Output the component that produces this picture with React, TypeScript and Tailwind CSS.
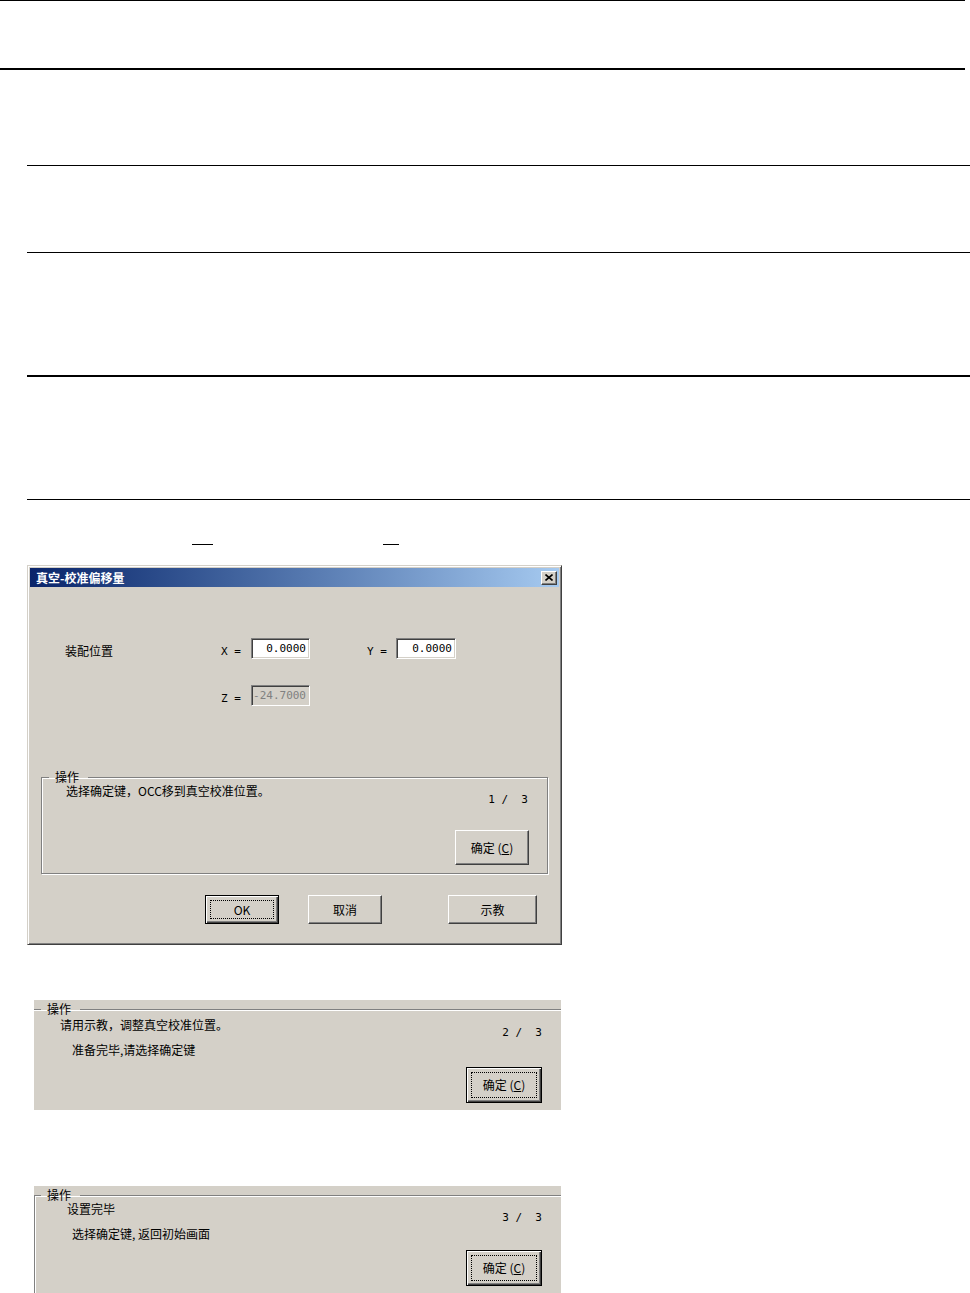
import React from "react";

// classic win32 bevels
const raised =
  "border border-t-white border-l-white border-r-[#404040] border-b-[#404040] shadow-[inset_-1px_-1px_0_#808080]";
const defaultBtn =
  "border border-black shadow-[inset_1px_1px_0_#fff,inset_-1px_-1px_0_#404040,inset_-2px_-2px_0_#808080]";
const sunken =
  "border border-t-[#808080] border-l-[#808080] border-r-white border-b-white shadow-[inset_1px_1px_0_#404040,inset_-1px_-1px_0_#d4d0c8]";
const etched = "border border-[#808080] shadow-[1px_1px_0_#fff,inset_1px_1px_0_#fff]";
const mono = "font-['DejaVu_Sans_Mono','Liberation_Mono',monospace] text-[11px] leading-[14px]";

function Btn({
  children,
  className,
  focused,
}: {
  children: React.ReactNode;
  className: string;
  focused?: boolean;
}) {
  return (
    <button
      type="button"
      className={`${focused ? defaultBtn : raised} ${className} flex shrink-0 bg-[#d4d0c8] p-[4px] text-black`}
    >
      <span
        className={`flex flex-1 items-center justify-center border ${
          focused ? "border-dotted border-black" : "border-transparent"
        }`}
      >
        {children}
      </span>
    </button>
  );
}

function Confirm({ className, focused }: { className: string; focused?: boolean }) {
  return (
    <Btn className={className} focused={focused}>
      确定 (<span className="underline">C</span>)
    </Btn>
  );
}

function Field({ value, disabled, w }: { value: string; disabled?: boolean; w: string }) {
  return (
    <div
      className={`${sunken} ${mono} ${w} h-[21px] flex items-center justify-end pr-[3px] ${
        disabled ? "bg-[#d4d0c8] text-[#808080]" : "bg-white text-black"
      }`}
    >
      {value}
    </div>
  );
}

function Step({ n, className }: { n: number; className: string }) {
  return <div className={`${mono} ${className} whitespace-pre`}>{`${n} /  3`}</div>;
}

export default function App() {
  return (
    <div className="w-[970px] min-h-[1293px] bg-white text-black text-[12px] leading-[14px] font-['Noto_Sans_CJK_SC','Liberation_Sans',sans-serif]">
      {/* document table rules */}
      <div className="w-[965px] h-[70px] border-t border-b-2 border-black" />
      <div className="ml-[27px]">
        <div className="h-[96px] border-b border-black" />
        <div className="h-[87px] border-b border-black" />
        <div className="h-[124px] border-b-2 border-black" />
        <div className="h-[123px] border-b border-black" />
      </div>
      <div className="flex pt-[44px]">
        <div className="ml-[192px] w-[21px] h-px bg-black" />
        <div className="ml-[170px] w-[16px] h-px bg-black" />
      </div>

      {/* dialog */}
      <div className="mt-[20px] ml-[27px] w-[535px] h-[380px] bg-[#d4d0c8] border border-t-[#d4d0c8] border-l-[#d4d0c8] border-r-[#404040] border-b-[#404040] shadow-[inset_1px_1px_0_#fff,inset_-1px_-1px_0_#808080] p-[2px] flex flex-col">
        <div className="h-[19px] flex items-center justify-between bg-linear-to-r from-[#0a246a] to-[#a6caf0] pl-[6px] pr-[2px]">
          <span className="text-white font-bold">真空-校准偏移量</span>
          <div className={`${raised} bg-[#d4d0c8] w-[16px] h-[14px] flex items-center justify-center`}>
            <svg width="8" height="7" viewBox="0 0 8 7">
              <path d="M0.5 0.5 L7.5 6.5 M7.5 0.5 L0.5 6.5" stroke="#000" strokeWidth="1.6" />
            </svg>
          </div>
        </div>

        <div className="mt-[51px] flex items-center h-[21px]">
          <span className="ml-[35px] w-[156px] pt-[5px]">装配位置</span>
          <span className={`${mono} w-[30px] pt-[6px]`}>X =</span>
          <Field value="0.0000" w="w-[59px]" />
          <span className={`${mono} ml-[57px] w-[29px] pt-[6px]`}>Y =</span>
          <Field value="0.0000" w="w-[60px]" />
        </div>
        <div className="mt-[26px] flex items-center h-[21px]">
          <span className={`${mono} ml-[191px] w-[30px] pt-[6px]`}>Z =</span>
          <Field value="-24.7000" w="w-[59px]" disabled />
        </div>

        <fieldset className={`${etched} mt-[64px] ml-[11px] w-[507px] pb-[8px]`}>
          <legend className="ml-[7px] pl-[6px] pr-[9px] leading-[14px]">操作</legend>
          <div className="flex">
            <div className="w-[413px] pl-[24px]">选择确定键，OCC移到真空校准位置。</div>
            <div className="w-[74px] flex flex-col items-end">
              <Step n={1} className="mt-[9px] mr-[1px]" />
              <Confirm className="mt-[23px] w-[74px] h-[35px]" />
            </div>
          </div>
        </fieldset>

        <div className="mt-[21px] flex">
          <Btn className="ml-[175px] w-[74px] h-[29px]" focused>
            OK
          </Btn>
          <Btn className="ml-[29px] w-[74px] h-[29px]">取消</Btn>
          <Btn className="ml-[66px] w-[89px] h-[29px]">示教</Btn>
        </div>
      </div>

      {/* step 2 */}
      <div className="mt-[55px] ml-[34px] w-[527px] h-[110px] bg-[#d4d0c8] overflow-hidden">
        <fieldset className={`${etched} mt-[2px] ml-[-6px] w-[560px] h-[140px]`}>
          <legend className="ml-[12px] pl-[6px] pr-[9px] leading-[14px]">操作</legend>
          <div className="flex">
            <div className="w-[437px] flex flex-col">
              <span className="ml-[31px] mt-[2px]">请用示教，调整真空校准位置。</span>
              <span className="ml-[43px] mt-[11px]">准备完毕,请选择确定键</span>
            </div>
            <div className="w-[76px] flex flex-col items-end">
              <Step n={2} className="mt-[10px]" />
              <Confirm className="mt-[27px] w-[76px] h-[36px]" focused />
            </div>
          </div>
        </fieldset>
      </div>

      {/* step 3 */}
      <div className="mt-[76px] ml-[34px] w-[527px] h-[107px] bg-[#d4d0c8] overflow-hidden">
        <fieldset className={`${etched} mt-[2px] w-[560px] h-[140px]`}>
          <legend className="ml-[6px] pl-[6px] pr-[9px] leading-[14px]">操作</legend>
          <div className="flex">
            <div className="w-[431px] flex flex-col">
              <span className="ml-[32px]">设置完毕</span>
              <span className="ml-[37px] mt-[11px]">选择确定键, 返回初始画面</span>
            </div>
            <div className="w-[76px] flex flex-col items-end">
              <Step n={3} className="mt-[9px]" />
              <Confirm className="mt-[25px] w-[76px] h-[36px]" focused />
            </div>
          </div>
        </fieldset>
      </div>
    </div>
  );
}
